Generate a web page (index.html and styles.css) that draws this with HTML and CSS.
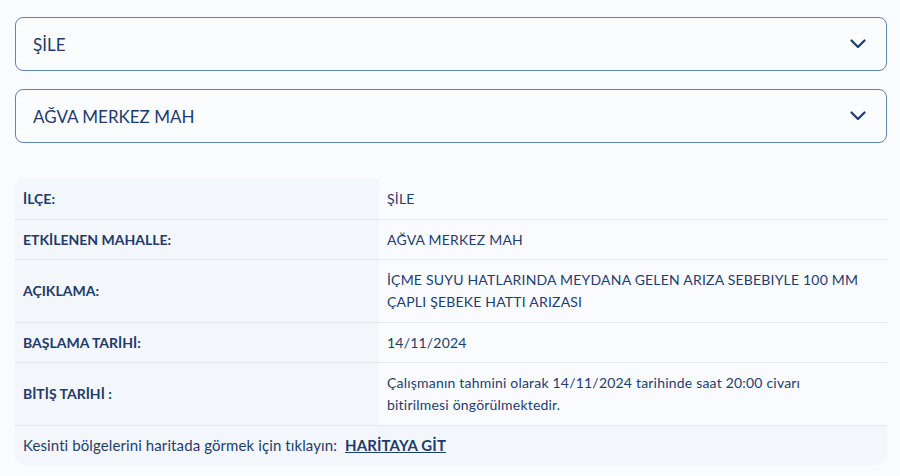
FILE: index.html
```html
<!DOCTYPE html>
<html lang="tr">

<head>
    <meta charset="UTF-8">
    <title>Arıza Kesinti Bilgisi</title>
    <link rel="stylesheet" href="styles.css">
</head>

<body>

    <div class="page">
        <div class="select">
            <span class="select-text">ŞİLE</span>
            <svg class="chevron" width="16" height="10" viewBox="0 0 16 10">
                <path d="M1.5 1.5 L8 8 L14.5 1.5" fill="none" stroke="#1b3a6c" stroke-width="2.2" stroke-linecap="round" stroke-linejoin="round"/>
            </svg>
        </div>

        <div class="select">
            <span class="select-text">AĞVA MERKEZ MAH</span>
            <svg class="chevron" width="16" height="10" viewBox="0 0 16 10">
                <path d="M1.5 1.5 L8 8 L14.5 1.5" fill="none" stroke="#1b3a6c" stroke-width="2.2" stroke-linecap="round" stroke-linejoin="round"/>
            </svg>
        </div>

        <table class="info">
            <tr>
                <th>İLÇE:</th>
                <td>ŞİLE</td>
            </tr>
            <tr>
                <th>ETKİLENEN MAHALLE:</th>
                <td>AĞVA MERKEZ MAH</td>
            </tr>
            <tr>
                <th>AÇIKLAMA:</th>
                <td>İÇME SUYU HATLARINDA MEYDANA GELEN ARIZA SEBEBIYLE 100 MM ÇAPLI ŞEBEKE HATTI ARIZASI</td>
            </tr>
            <tr>
                <th>BAŞLAMA TARİHİ:</th>
                <td>14/11/2024</td>
            </tr>
            <tr>
                <th>BİTİŞ TARİHİ :</th>
                <td>Çalışmanın tahmini olarak 14/11/2024 tarihinde saat 20:00 civarı bitirilmesi öngörülmektedir.</td>
            </tr>
            <tr class="map-row">
                <td colspan="2">Kesinti bölgelerini haritada görmek için tıklayın: <a href="#">HARİTAYA GİT</a></td>
            </tr>
        </table>
    </div>

</body>

</html>
```

FILE: styles.css
```css
body {
    margin: 0;
    font-family: Lato, "Noto Sans", sans-serif;
    color: #1d3b6c;
    background-color: #f9fbfe;
}

.page {
    padding: 17px 13px 0 15px;
}

.select {
    display: flex;
    align-items: center;
    height: 54px;
    box-sizing: border-box;
    padding: 0 20px 0 17px;
    margin-bottom: 18px;
    border: 1.5px solid #6384bb;
    border-radius: 8px;
    background: #fbfcfe;
    font-size: 17px;
    color: #1d3b6c;
}

.select-text {
    flex: 1;
}

.chevron {
    display: block;
}

.info {
    width: 100%;
    margin-top: 36px;
    border-collapse: separate;
    border-spacing: 0;
    background: #f3f6fb;
    border-radius: 10px;
    font-size: 14px;
    line-height: 22px;
}

.info th,
.info td {
    padding: 9px 22px 8.5px 8px;
    border-bottom: 1px solid #e4e8ee;
    text-align: left;
    vertical-align: middle;
}

.info th {
    width: 334px;
    font-weight: 700;
    color: #1d3b6c;
}

.info td {
    background: #fafbfe;
    color: #1e3d6f;
    letter-spacing: 0.2px;
}

.info tr:first-child th {
    border-top-left-radius: 10px;
}

.info .map-row td {
    background: transparent;
    border-bottom: none;
    padding: 8px 8px 9px;
    font-size: 15px;
    letter-spacing: 0.1px;
}

.info .map-row a {
    margin-left: 4px;
    color: #1d3b6c;
    font-weight: 700;
    text-decoration: underline;
}
```
